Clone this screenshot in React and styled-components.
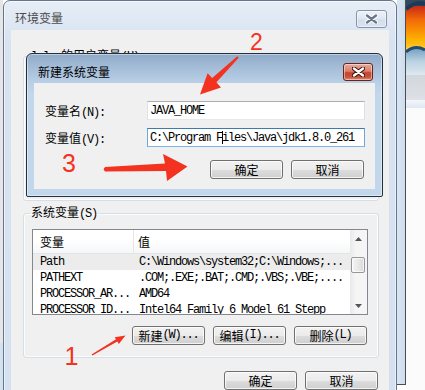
import React from "react";
import styled, { createGlobalStyle } from "styled-components";

const UI = `"Noto Sans CJK SC", "Noto Sans", sans-serif`;
const MONO = `"Liberation Mono", "DejaVu Sans Mono", monospace`;

const Global = createGlobalStyle`
  html, body { margin: 0; padding: 0; }
  body {
    width: 425px; height: 390px; overflow: hidden; background: #fff;
    font-family: ${UI}; font-size: 12px; color: #000;
  }
  #root { width: 425px; height: 390px; }
`;

const Screen = styled.div`
  position: relative;
  width: 425px;
  height: 390px;
  overflow: hidden;
  display: flex;
  align-items: flex-start;
  background: #fff;
`;

const LeftStrip = styled.div`
  flex: none;
  width: 3px;
  height: 390px;
  background: linear-gradient(#e6e6e6 0 88%, #d3e1f0 88% 100%);
`;

const OuterWindow = styled.div`
  flex: none;
  width: 394px;
  height: 420px;
  box-sizing: border-box;
  border: 1px solid #66768a;
  border-radius: 7px 7px 0 0;
  background: linear-gradient(#e6edf6, #d8e3f1 40px, #d4e1f0);
  padding: 0 7px;
  display: flex;
  flex-direction: column;
  box-shadow: inset 0 0 0 1px rgba(255, 255, 255, 0.55);
`;

const TitleBar = styled.div`
  height: 29px;
  flex: none;
  display: flex;
  justify-content: space-between;
  align-items: flex-start;
  padding: 0 ${(p) => p.$pr}px 0 4px;
`;

const TitleText = styled.div`
  margin-top: ${(p) => p.$mt}px;
  line-height: 16px;
  font-size: 12px;
  color: ${(p) => (p.$inactive ? "#4b4b4b" : "#000")};
`;

const CloseBtn = styled.div`
  margin-top: 9px;
  width: ${(p) => p.$w}px;
  height: 18px;
  box-sizing: border-box;
  border-radius: 3px;
  display: flex;
  align-items: center;
  justify-content: center;
  border: 1px solid ${(p) => (p.$active ? "#6b2418" : "#8594a8")};
  background: ${(p) =>
    p.$active
      ? "linear-gradient(#e8ab9c 0%, #d9806c 45%, #c4442f 55%, #c9503a 80%, #de8a70 100%)"
      : "linear-gradient(#edf2f8 0%, #dfe7f1 50%, #d2dded 55%, #dbe4ef 100%)"};
  box-shadow: inset 0 0 0 1px rgba(255, 255, 255, 0.45);
`;

const Client = styled.div`
  flex: 1;
  background: #f0f0f0;
  display: flex;
  flex-direction: column;
`;

const Group = styled.fieldset`
  margin: ${(p) => p.$mt}px 10px 0 12px;
  padding: 0 10px 12px 8px;
  border: 1px solid #d5dfe5;
  border-radius: 3px;
  min-width: 0;
  box-shadow: inset 0 0 0 1px #fbfcfd;
`;

const Legend = styled.legend`
  padding: 0 1px;
  margin-left: -2px;
  line-height: 14px;
  font-size: 12px;
  color: #000;
`;

const Spacer = styled.div`
  height: ${(p) => p.$h}px;
`;

const Half = styled.span`
  font-family: ${MONO};
  letter-spacing: -1.2px;
`;

const MonoText = styled.span`
  font-family: ${MONO};
  font-size: 12px;
  letter-spacing: -1.2px;
  white-space: pre;
  color: #000;
`;

const ListView = styled.div`
  margin-top: 8px;
  height: 86px;
  box-sizing: border-box;
  border: 1px solid #828790;
  background: #fff;
  display: flex;
  overflow: hidden;
`;

const ListMain = styled.div`
  flex: 1;
  min-width: 0;
  display: flex;
  flex-direction: column;
  overflow: hidden;
`;

const HeaderRow = styled.div`
  flex: none;
  display: grid;
  grid-template-columns: 101px 1fr;
  height: 23px;
  border-bottom: 1px solid #e2e4e7;
  background: linear-gradient(#ffffff 0%, #ffffff 45%, #f5f6f7 100%);
`;

const HeaderCell = styled.div`
  display: flex;
  align-items: center;
  padding-left: ${(p) => p.$pl}px;
  border-right: ${(p) => (p.$divider ? "1px solid #e3e5e7" : "none")};
  font-size: 12px;
`;

const Row = styled.div`
  flex: none;
  display: grid;
  grid-template-columns: 101px 1fr;
  height: 16px;
  align-items: center;
  background: ${(p) => (p.$selected ? "#ececec" : "transparent")};
`;

const Cell = styled.div`
  padding-left: ${(p) => p.$pl}px;
  overflow: hidden;
  display: flex;
  align-items: center;
`;

const ScrollBar = styled.div`
  flex: none;
  width: 17px;
  display: flex;
  flex-direction: column;
  background: linear-gradient(90deg, #e9e9e9, #f5f5f5 35%, #f5f5f5);
`;

const ScrollArrow = styled.div`
  height: 17px;
  flex: none;
  display: flex;
  align-items: center;
  justify-content: center;
`;

const Track = styled.div`
  flex: 1;
  padding-top: 10px;
`;

const Thumb = styled.div`
  height: 16px;
  margin: 0 2px 0 1px;
  box-sizing: border-box;
  border: 1px solid #979797;
  border-radius: 2px;
  background: linear-gradient(90deg, #f4f4f4, #e9e9e9 50%, #d9d9d9);
  box-shadow: inset 0 0 0 1px rgba(255, 255, 255, 0.7);
`;

const ButtonRow = styled.div`
  display: flex;
  justify-content: flex-end;
  gap: 8px;
  margin-top: ${(p) => p.$mt}px;
  margin-right: ${(p) => p.$mr}px;
`;

const Btn = styled.div`
  width: 73px;
  height: 19px;
  box-sizing: border-box;
  border: 1px solid #707070;
  border-radius: 3px;
  background: linear-gradient(#f2f2f2 0%, #ebebeb 50%, #dddddd 51%, #cfcfcf 100%);
  box-shadow: inset 0 0 0 1px rgba(255, 255, 255, 0.75);
  display: flex;
  align-items: center;
  justify-content: center;
  font-size: 12px;
  line-height: 17px;
  color: #000;
  white-space: pre;
`;

const BehindWindow = styled.div`
  flex: none;
  width: 9px;
  height: 385px;
  box-sizing: border-box;
  border-right: 1px solid #4a4f57;
  border-bottom: 1px solid #4a4f57;
  background: linear-gradient(90deg, #dae6f3, #cfdcec);
`;

const RightStrip = styled.div`
  flex: 1;
  height: 390px;
  display: flex;
  flex-direction: column;
`;

const Band = styled.div`
  flex: none;
  height: ${(p) => p.$h}px;
  background: ${(p) => p.$bg};
`;

const Dialog = styled.div`
  position: absolute;
  left: 26px;
  top: 53px;
  width: 357px;
  box-sizing: border-box;
  border: 1px solid #22303f;
  border-radius: 6px 6px 2px 2px;
  background: linear-gradient(#8eaac8 0px, #a5bdd8 14px, #bad0e7 29px, #c2d6ec 40px, #c2d6ec 100%);
  padding: 0 7px 7px;
  box-shadow: inset 0 0 0 1px rgba(255, 255, 255, 0.45);
  z-index: 2;
`;

const DialogClient = styled.div`
  height: 106px;
  box-sizing: border-box;
  background: #f0f0f0;
  padding: 18px 10px 0 11px;
  display: flex;
  flex-direction: column;
`;

const FieldRow = styled.div`
  display: flex;
  align-items: center;
  height: 19px;
  margin-top: ${(p) => p.$mt}px;
`;

const FieldLabel = styled.div`
  width: 102px;
  flex: none;
  font-size: 12px;
  white-space: pre;
`;

const Field = styled.div`
  width: 218px;
  height: 19px;
  box-sizing: border-box;
  background: #fff;
  border: 1px solid;
  border-color: ${(p) =>
    p.$focused ? "#3d7bad #6ea6d8 #7eb4ea #6ea6d8" : "#abadb3 #dbdfe6 #e3e9ef #e2e3ea"};
  padding-left: 2px;
  display: flex;
  align-items: center;
  overflow: hidden;
`;

const Caret = styled.span`
  display: inline-block;
  width: 1px;
  height: 13px;
  margin-right: -1px;
  background: #000;
  vertical-align: middle;
`;

const Overlay = styled.svg`
  position: absolute;
  left: 0;
  top: 0;
  z-index: 3;
  pointer-events: none;
`;

function XGlyph({ active }) {
  return (
    <svg width="13" height="10" viewBox="0 0 13 10">
      <path
        d="M2 1.5 L11 8.5 M11 1.5 L2 8.5"
        stroke={active ? "#3b120b" : "#ffffff"}
        strokeWidth="4.4"
        strokeLinecap="round"
        fill="none"
      />
      <path
        d="M2 1.5 L11 8.5 M11 1.5 L2 8.5"
        stroke={active ? "#ffffff" : "#6a7787"}
        strokeWidth="2.4"
        strokeLinecap="round"
        fill="none"
      />
    </svg>
  );
}

function Tri({ down }) {
  return (
    <svg width="7" height="4" viewBox="0 0 7 4">
      <polygon points={down ? "0,0 7,0 3.5,4" : "0,4 7,4 3.5,0"} fill="#555" />
    </svg>
  );
}

const rows = [
  { name: "Path", value: "C:\\Windows\\system32;C:\\Windows;...", selected: true },
  { name: "PATHEXT", value: ".COM;.EXE;.BAT;.CMD;.VBS;.VBE;...." },
  { name: "PROCESSOR_AR...", value: "AMD64" },
  { name: "PROCESSOR_ID...", value: "Intel64 Family 6 Model 61 Stepp" },
];

function Wallpaper() {
  return (
    <svg width="19" height="75" viewBox="0 0 19 75">
      <defs>
        <linearGradient id="sun" x1="0" y1="0" x2="0" y2="1">
          <stop offset="0" stopColor="#c92a16" />
          <stop offset="0.3" stopColor="#f26a08" />
          <stop offset="0.75" stopColor="#ffb400" />
          <stop offset="1" stopColor="#ffd24a" />
        </linearGradient>
        <linearGradient id="sky" x1="0" y1="0" x2="0" y2="1">
          <stop offset="0" stopColor="#6f9cbd" />
          <stop offset="0.5" stopColor="#b9d2e2" />
          <stop offset="1" stopColor="#dfe8ee" />
        </linearGradient>
      </defs>
      <rect width="19" height="75" fill="#34495c" />
      <rect y="6" width="19" height="46" fill="url(#sun)" />
      <path d="M0 9 Q9 1 19 4" stroke="#1c3b5c" strokeWidth="4" fill="none" />
      <path d="M0 52 Q9 44 19 50 L19 75 L0 75 Z" fill="url(#sky)" />
      <path d="M0 52 Q9 44 19 50" stroke="#234c73" strokeWidth="3" fill="none" />
    </svg>
  );
}

function Annotations() {
  const red = "#f3321f";
  return (
    <Overlay width="425" height="390" viewBox="0 0 425 390">
      <text x="256.5" y="49.5" fill={red} fontFamily="Liberation Sans, Arial, sans-serif" fontSize="23" textAnchor="middle">2</text>
      <polygon
        fill={red}
        points="238.7,57.7 216.4,82.3 221,87.5 200,94.5 207.6,73.2 212.2,77.9 237.3,56.3"
      />
      <text x="69" y="172" fill={red} fontFamily="Liberation Sans, Arial, sans-serif" fontSize="25" textAnchor="middle">3</text>
      <polygon
        fill={red}
        points="105,167 165,163.5 163,154 187.5,166.5 167,181 166,171 105,171.5 103.5,169.3"
      />
      <text x="71.5" y="365" fill={red} fontFamily="Liberation Sans, Arial, sans-serif" fontSize="25" textAnchor="middle">1</text>
      <polygon
        fill={red}
        points="92.4,355.6 117.3,341.5 118.8,344 125.5,335.5 114.7,337.2 116.0,339.3 91.6,354.4"
      />
    </Overlay>
  );
}

export default function App() {
  return (
    <>
      <Global />
      <Screen>
        <LeftStrip />
        <OuterWindow>
          <TitleBar $pr={2}>
            <TitleText $mt={9} $inactive>环境变量</TitleText>
            <CloseBtn $w={31}>
              <XGlyph />
            </CloseBtn>
          </TitleBar>
          <Client>
            <Group $mt={18}>
              <Legend>
                <Half>lulu </Half>的用户变量<Half>(U)</Half>
              </Legend>
              <Spacer $h={124} />
            </Group>
            <Group $mt={4}>
              <Legend>
                系统变量<Half>(S)</Half>
              </Legend>
              <ListView>
                <ListMain>
                  <HeaderRow>
                    <HeaderCell $pl={7} $divider>变量</HeaderCell>
                    <HeaderCell $pl={4}>值</HeaderCell>
                  </HeaderRow>
                  {rows.map((r) => (
                    <Row key={r.name} $selected={r.selected}>
                      <Cell $pl={7}>
                        <MonoText>{r.name}</MonoText>
                      </Cell>
                      <Cell $pl={5}>
                        <MonoText>{r.value}</MonoText>
                      </Cell>
                    </Row>
                  ))}
                </ListMain>
                <ScrollBar>
                  <ScrollArrow>
                    <Tri />
                  </ScrollArrow>
                  <Track>
                    <Thumb />
                  </Track>
                  <ScrollArrow>
                    <Tri down />
                  </ScrollArrow>
                </ScrollBar>
              </ListView>
              <ButtonRow $mt={11} $mr={1}>
                <Btn>
                  新建<Half>(W)...</Half>
                </Btn>
                <Btn>
                  编辑<Half>(I)...</Half>
                </Btn>
                <Btn>
                  删除<Half>(L)</Half>
                </Btn>
              </ButtonRow>
            </Group>
            <ButtonRow $mt={13} $mr={11}>
              <Btn>确定</Btn>
              <Btn>取消</Btn>
            </ButtonRow>
          </Client>
        </OuterWindow>
        <BehindWindow />
        <RightStrip>
          <Wallpaper />
          <Band $h={25} $bg="linear-gradient(#d2d7dd, #dde1e6)" />
          <Band $h={8} $bg="linear-gradient(#f4f7fb, #dfe7f2)" />
          <Band $h={282} $bg="#fbfbfc" />
        </RightStrip>

        <Dialog>
          <TitleBar $pr={2}>
            <TitleText $mt={10}>新建系统变量</TitleText>
            <CloseBtn $w={30} $active>
              <XGlyph active />
            </CloseBtn>
          </TitleBar>
          <DialogClient>
            <FieldRow $mt={0}>
              <FieldLabel>
                变量名<Half>(N):</Half>
              </FieldLabel>
              <Field>
                <MonoText>JAVA_HOME</MonoText>
              </Field>
            </FieldRow>
            <FieldRow $mt={8}>
              <FieldLabel>
                变量值<Half>(V):</Half>
              </FieldLabel>
              <Field $focused>
                <MonoText>
                  C:\Program F<Caret />iles\Java\jdk1.8.0_261
                </MonoText>
              </Field>
            </FieldRow>
            <ButtonRow $mt={13} $mr={1}>
              <Btn>确定</Btn>
              <Btn>取消</Btn>
            </ButtonRow>
          </DialogClient>
        </Dialog>

        <Annotations />
      </Screen>
    </>
  );
}
